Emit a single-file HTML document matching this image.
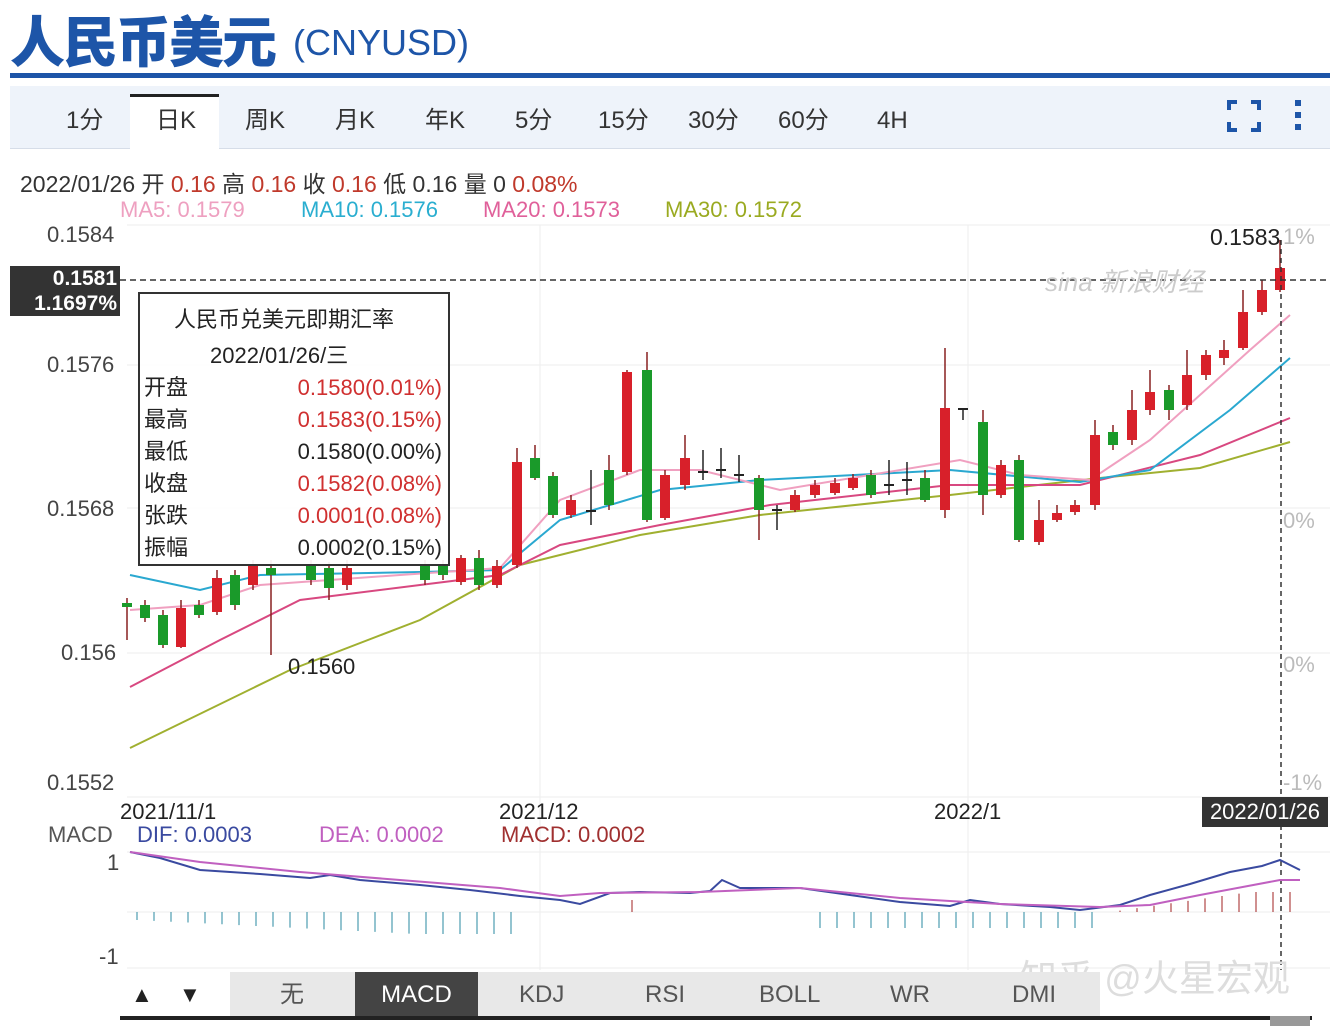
<!DOCTYPE html>
<html><head><meta charset="utf-8">
<style>
*{margin:0;padding:0;box-sizing:border-box}
body{width:1344px;height:1026px;background:#fff;font-family:"Liberation Sans","Noto Sans CJK SC",sans-serif;position:relative;overflow:hidden;color:#222}
.a{position:absolute;white-space:nowrap}
.t span{line-height:30px}
</style></head><body>
<div class="a" style="left:10px;top:-2px;font-size:55px;font-weight:900;color:#1d55a8;letter-spacing:-2px">人民币美元</div>
<div class="a" style="left:293px;top:22px;font-size:36px;color:#1d55a8">(CNYUSD)</div>
<div class="a" style="left:10px;top:73px;width:1320px;height:5px;background:#1d55a8"></div>
<div class="a" style="left:10px;top:86px;width:1320px;height:63px;background:#eef3fa;border-bottom:1px solid #d6dde8"></div>
<div class="a" style="left:130px;top:94px;width:89px;height:56px;background:#fff;border-top:3px solid #222"></div>
<div class="a t" style="top:106px;font-size:24px;color:#333;left:0">
<span class="a" style="left:66px">1分</span><span class="a" style="left:156px">日K</span><span class="a" style="left:245px">周K</span><span class="a" style="left:335px">月K</span><span class="a" style="left:425px">年K</span><span class="a" style="left:515px">5分</span><span class="a" style="left:598px">15分</span><span class="a" style="left:688px">30分</span><span class="a" style="left:778px">60分</span><span class="a" style="left:877px">4H</span></div>
<svg class="a" style="left:1225px;top:98px" width="90" height="36"><g fill="none" stroke="#1d55a8" stroke-width="4"><path d="M4 12V4h8M26 4h8v8M4 24v8h8M26 32h8v-8"/></g><g fill="#1d55a8"><rect x="70" y="2" width="6" height="6"/><rect x="70" y="14" width="6" height="6"/><rect x="70" y="26" width="6" height="6"/></g></svg>
<div class="a" style="left:20px;top:165px;font-size:23px;color:#333">2022/01/26 开 <span style="color:#c0392b">0.16</span> 高 <span style="color:#c0392b">0.16</span> 收 <span style="color:#c0392b">0.16</span> 低 0.16 量 0 <span style="color:#c0392b">0.08%</span></div>
<div class="a" style="left:120px;top:197px;font-size:22px;color:#eea0c0">MA5: 0.1579</div>
<div class="a" style="left:301px;top:197px;font-size:22px;color:#2aaed0">MA10: 0.1576</div>
<div class="a" style="left:483px;top:197px;font-size:22px;color:#e0609a">MA20: 0.1573</div>
<div class="a" style="left:665px;top:197px;font-size:22px;color:#9aaa20">MA30: 0.1572</div>
<svg class="a" style="left:0;top:0" width="1344" height="1026" id="s"></svg>
<div class="a" style="left:47px;top:222px;font-size:22px;color:#444">0.1584</div>
<div class="a" style="left:47px;top:352px;font-size:22px;color:#444">0.1576</div>
<div class="a" style="left:47px;top:496px;font-size:22px;color:#444">0.1568</div>
<div class="a" style="left:61px;top:640px;font-size:22px;color:#444">0.156</div>
<div class="a" style="left:47px;top:770px;font-size:22px;color:#444">0.1552</div>
<div class="a" style="left:10px;top:266px;width:110px;height:50px;background:#333;color:#fff;font-size:21px;font-weight:bold;text-align:right;padding-right:3px;line-height:25px">0.1581<br>1.1697%</div>
<div class="a" style="left:1210px;top:224px;font-size:23px;color:#222">0.1583</div>
<div class="a" style="left:1283px;top:224px;font-size:22px;color:#bbb">1%</div>
<div class="a" style="left:1283px;top:508px;font-size:22px;color:#bbb">0%</div>
<div class="a" style="left:1283px;top:652px;font-size:22px;color:#bbb">0%</div>
<div class="a" style="left:1283px;top:770px;font-size:22px;color:#bbb">-1%</div>
<div class="a" style="left:1045px;top:262px;font-size:26px;color:#ccc;font-style:italic">sina 新浪财经</div>
<div class="a" style="left:288px;top:654px;font-size:22px;color:#222">0.1560</div>
<div class="a" style="left:138px;top:292px;width:312px;height:274px;background:rgba(255,255,255,.93);border:2px solid #333;font-size:22px;color:#222">
<div class="a" style="left:34px;top:8px">人民币兑美元即期汇率</div>
<div class="a" style="left:70px;top:44px">2022/01/26/三</div>
<div class="a" style="left:4px;top:78px;line-height:32px">开盘<br>最高<br>最低<br>收盘<br>张跌<br>振幅</div>
<div class="a" style="right:6px;top:78px;line-height:32px;text-align:right"><span style="color:#d03030">0.1580(0.01%)</span><br><span style="color:#d03030">0.1583(0.15%)</span><br>0.1580(0.00%)<br><span style="color:#d03030">0.1582(0.08%)</span><br><span style="color:#d03030">0.0001(0.08%)</span><br>0.0002(0.15%)</div>
</div>
<div class="a" style="left:120px;top:799px;font-size:22px;color:#222">2021/11/1</div>
<div class="a" style="left:499px;top:799px;font-size:22px;color:#222">2021/12</div>
<div class="a" style="left:934px;top:799px;font-size:22px;color:#222">2022/1</div>
<div class="a" style="left:1202px;top:797px;width:126px;height:30px;background:#333;color:#fff;font-size:22px;text-align:center;line-height:30px">2022/01/26</div>
<div class="a" style="left:48px;top:822px;font-size:22px;color:#555">MACD</div>
<div class="a" style="left:137px;top:822px;font-size:22px;color:#3a4aa0">DIF: 0.0003</div>
<div class="a" style="left:319px;top:822px;font-size:22px;color:#c060c0">DEA: 0.0002</div>
<div class="a" style="left:501px;top:822px;font-size:22px;color:#a03030">MACD: 0.0002</div>
<div class="a" style="left:107px;top:850px;font-size:22px;color:#444">1</div>
<div class="a" style="left:99px;top:944px;font-size:22px;color:#444">-1</div>
<div class="a" style="left:1020px;top:948px;font-size:37px;color:#ddd">知乎 @火星宏观</div>
<div class="a" style="left:120px;top:972px;width:980px;height:44px;background:#e8e8e8"></div>
<div class="a" style="left:120px;top:972px;width:110px;height:44px;background:#fff"></div>
<div class="a" style="left:131px;top:982px;font-size:22px">▲</div><div class="a" style="left:179px;top:982px;font-size:22px">▼</div>
<div class="a" style="top:980px;font-size:24px;color:#555;left:0">
<span class="a" style="left:280px;line-height:30px">无</span><span class="a" style="left:519px;line-height:30px">KDJ</span><span class="a" style="left:645px;line-height:30px">RSI</span><span class="a" style="left:759px;line-height:30px">BOLL</span><span class="a" style="left:890px;line-height:30px">WR</span><span class="a" style="left:1012px;line-height:30px">DMI</span></div>
<div class="a" style="left:355px;top:972px;width:123px;height:44px;background:#444;color:#fff;font-size:24px;text-align:center;line-height:46px">MACD</div>
<div class="a" style="left:120px;top:1016px;width:1192px;height:4px;background:#222"></div>
<div class="a" style="left:1270px;top:1016px;width:40px;height:10px;background:#999"></div>
<script>
var s=document.getElementById('s'),h='';
function L(x1,y1,x2,y2,c,w,d){h+='<line x1="'+x1+'" y1="'+y1+'" x2="'+x2+'" y2="'+y2+'" stroke="'+c+'" stroke-width="'+(w||1)+'"'+(d?' stroke-dasharray="'+d+'"':'')+'/>';}
[225,365,508,653,797,852,912,968].forEach(function(y){L(127,y,1330,y,'#eee')});
[540,968].forEach(function(x){L(x,225,x,970,'#eee')});
function P(pts,c,w){h+='<polyline fill="none" stroke="'+c+'" stroke-width="'+(w||2)+'" points="'+pts+'"/>';}
P('130,748 290,670 420,620 520,565 640,535 760,515 950,495 1100,478 1200,468 1290,442','#a0b030');
P('130,687 220,640 300,600 420,585 500,575 560,545 660,525 770,505 950,485 1080,485 1200,455 1290,418','#d84880');
P('130,575 200,590 260,575 420,572 500,570 560,520 660,490 760,480 950,470 1080,482 1150,470 1230,410 1290,358','#2aa8d0');
P('130,610 200,605 260,585 400,575 500,568 560,500 640,470 700,470 780,490 960,460 1020,475 1090,480 1150,440 1250,350 1290,315','#f0a0c0');
var c=[[127,'g',603,607,598,640],[145,'g',605,618,600,622],[163,'g',615,645,610,648],[181,'r',608,647,600,648],[199,'g',605,615,600,618],[217,'r',578,612,570,615],[235,'g',575,605,570,610],[253,'r',565,585,560,590],[271,'g',568,575,560,655],[311,'g',565,580,560,585],[329,'g',568,588,562,600],[347,'r',568,585,560,590],[425,'g',565,580,560,585],[443,'g',565,575,560,580],[461,'r',558,582,555,585],[479,'g',558,585,550,590],[497,'r',566,585,560,588],[517,'r',462,565,448,568],[535,'g',458,478,445,480],[553,'g',476,515,472,518],[571,'r',500,515,495,518],[591,'k',510,512,470,525],[609,'g',470,505,455,510],[627,'r',372,472,370,475],[647,'g',370,520,352,522],[665,'r',475,518,470,520],[685,'r',458,485,435,490],[703,'k',471,473,450,480],[721,'k',469,471,448,478],[739,'k',474,476,455,482],[759,'g',478,510,475,540],[777,'k',509,511,505,530],[795,'r',495,510,490,512],[815,'r',485,495,480,498],[835,'r',483,493,478,495],[853,'r',478,488,474,490],[871,'g',475,495,470,498],[889,'k',484,486,460,495],[907,'k',479,481,462,495],[925,'g',478,500,470,502],[945,'r',408,510,348,518],[963,'k',408,410,408,420],[983,'g',422,495,410,515],[1001,'r',465,495,460,498],[1019,'g',460,540,455,542],[1039,'r',520,542,500,545],[1057,'r',513,520,505,522],[1075,'r',505,512,500,515],[1095,'r',435,505,420,510],[1113,'g',432,445,425,450],[1132,'r',410,440,390,445],[1150,'r',392,410,370,415],[1169,'g',390,410,385,420],[1187,'r',375,405,350,410],[1206,'r',355,375,350,380],[1224,'r',350,358,340,365],[1243,'r',312,348,290,350],[1262,'r',290,312,280,315],[1280,'r',268,290,240,292]];
c.forEach(function(k){var col=k[1]=='g'?'#1a9a2a':k[1]=='r'?'#d8202a':'#222';L(k[0],k[4],k[0],k[5],k[1]=='k'?'#222':'#882020',1.5);h+='<rect x="'+(k[0]-5)+'" y="'+k[2]+'" width="10" height="'+Math.max(2,k[3]-k[2])+'" fill="'+col+'"/>';});
L(10,280,1330,280,'#333',1.5,'6,4');L(1281,240,1281,970,'#333',1.5,'5,4');
P('130,852 160,858 200,870 260,874 310,878 330,875 360,880 420,885 470,890 520,896 560,900 580,904 610,893 640,892 690,893 710,891 722,880 740,888 800,888 850,895 900,902 950,906 970,900 1000,904 1050,907 1080,910 1120,905 1150,895 1190,884 1230,872 1262,866 1280,860 1300,870','#3a4aa0');
P('130,852 200,862 300,872 400,880 500,888 560,896 600,893 700,892 800,888 900,898 1000,904 1100,907 1150,905 1200,895 1280,880 1300,880','#c060c0');
for(var x=137;x<=520;x+=17)L(x,912,x,912+Math.min(22,8+(x-137)/20),'#2a8aa0');
for(var x=820;x<=1100;x+=17)L(x,912,x,928,'#2a8aa0');
for(var x=1120;x<=1290;x+=17)L(x,912,x,912-Math.min(20,(x-1110)/7),'#a02020');
L(632,900,632,912,'#a02020');
s.innerHTML=h;
</script>
</body></html>
